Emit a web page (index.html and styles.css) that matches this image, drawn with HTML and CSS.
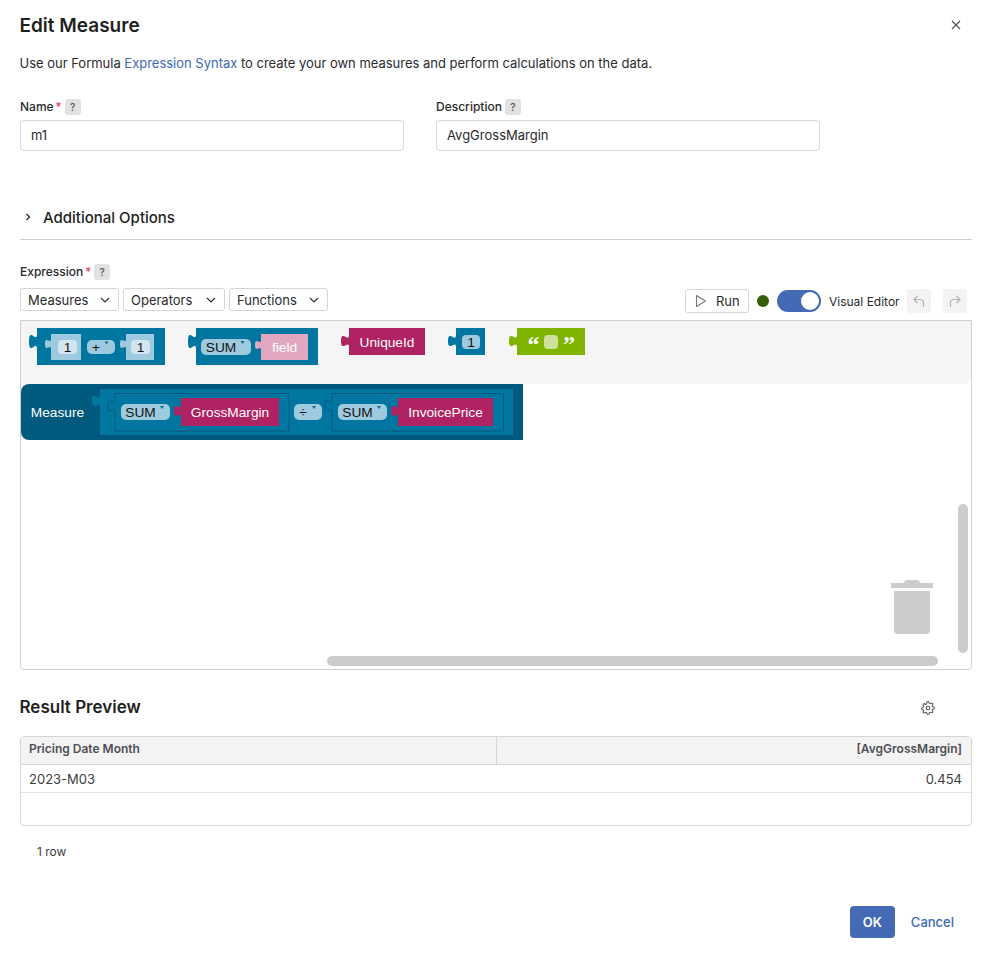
FILE: index.html
```html
<!DOCTYPE html>
<html lang="en">
<head>
<meta charset="UTF-8">
<title>Edit Measure</title>
<link rel="stylesheet" href="styles.css">
</head>
<body>
<div class="dialog">

  <!-- Header -->
  <div class="head">
    <h1>Edit Measure</h1>
    <button class="close" aria-label="Close">
      <svg width="10" height="10" viewBox="0 0 10 10"><path d="M1 1l8 8M9 1l-8 8" stroke="#555" stroke-width="1.2" fill="none"/></svg>
    </button>
  </div>
  <p class="intro">Use our Formula <a href="#">Expression Syntax</a> to create your own measures and perform calculations on the data.</p>

  <!-- Name / description -->
  <div class="fields">
    <div>
      <div class="label">Name<span class="req">*</span><span class="help">?</span></div>
      <input class="text" type="text" value="m1">
    </div>
    <div>
      <div class="label">Description<span class="help">?</span></div>
      <input class="text" type="text" value="AvgGrossMargin">
    </div>
  </div>

  <div class="options">
    <svg width="8" height="8" viewBox="0 0 8 8"><path d="M2.5 1l3 3-3 3" stroke="#222" stroke-width="1.2" fill="none"/></svg>
    <span>Additional Options</span>
  </div>

  <!-- Expression editor -->
  <div class="label expr-label">Expression<span class="req">*</span><span class="help">?</span></div>
  <div class="toolbar">
    <div class="menus">
      <button class="menu m1">Measures<svg width="10" height="6" viewBox="0 0 10 6"><path d="M1 1l4 4 4-4" stroke="#333" stroke-width="1.2" fill="none"/></svg></button>
      <button class="menu m2">Operators<svg width="10" height="6" viewBox="0 0 10 6"><path d="M1 1l4 4 4-4" stroke="#333" stroke-width="1.2" fill="none"/></svg></button>
      <button class="menu m3">Functions<svg width="10" height="6" viewBox="0 0 10 6"><path d="M1 1l4 4 4-4" stroke="#333" stroke-width="1.2" fill="none"/></svg></button>
    </div>
    <div class="actions">
      <button class="run">
        <svg width="12" height="14" viewBox="0 0 12 14"><path d="M1.5 1.5v11l9-5.5z" stroke="#777" stroke-width="1.1" stroke-linejoin="round" fill="none"/></svg>
        Run
      </button>
      <span class="dot"></span>
      <span class="toggle"><span class="thumb"></span></span>
      <span class="toggle-text">Visual Editor</span>
      <button class="hist">
        <svg width="14" height="14" viewBox="0 0 14 14"><path d="M5.5 2L2 5.5 5.5 9M2 5.5h6.500a3 3 0 0 1 3 3V13" stroke="#b5b5b5" stroke-width="1.200" fill="none"/></svg>
      </button>
      <button class="hist">
        <svg width="14" height="14" viewBox="0 0 14 14"><path d="M8.500 2L12 5.500 8.500 9M12 5.500H5.500a3 3 0 0 0-3 3V13" stroke="#b5b5b5" stroke-width="1.200" fill="none"/></svg>
      </button>
    </div>
  </div>

  <div class="workspace">
    <svg class="blocks" width="950" height="348" viewBox="21 321 950 348">
      <path d="M21 321H971V376a8 8 0 0 1-8 8H21z" fill="#f5f5f5"/>

      <!-- toolbox: 1 + 1 -->
      <path d="M37 328V334c0 10-8-8-8 7.500s8-2.500 8 7.500V365H165V328z" fill="#0076a0"/>
      <path d="M51 334V339c0 6-6-4-6 5s6-1 6 5V360H81V334z" fill="#9ecadf"/>
      <rect x="58" y="340" width="19" height="14" rx="4" fill="#d3e6ef"/>
      <text class="bt dark" x="67.500" y="352">1</text>
      <rect x="87" y="340" width="28" height="14" rx="5" fill="#9ecadf"/>
      <text class="bt dark" x="96" y="352">+</text>
      <path class="arrow" d="M104.500 341.500h4l-2 3z"/>
      <path d="M126 334V339c0 6-6-4-6 5s6-1 6 5V360H154V334z" fill="#9ecadf"/>
      <rect x="131" y="340" width="19" height="14" rx="4" fill="#d3e6ef"/>
      <text class="bt dark" x="140.500" y="352">1</text>

      <!-- toolbox: SUM field -->
      <path d="M196 328V334c0 10-8-8-8 7.500s8-2.500 8 7.500V365H318V328z" fill="#0076a0"/>
      <rect x="201" y="339" width="50" height="16" rx="5" fill="#9ecadf"/>
      <text class="bt dark" x="221" y="352">SUM</text>
      <path class="arrow" d="M240.500 341h4l-2 3z"/>
      <path d="M261 334V340c0 6-6-4-6 5s6-1 6 5V360H308V334z" fill="#e1a7c1"/>
      <text class="bt" x="284.500" y="352">field</text>

      <!-- toolbox: UniqueId -->
      <path d="M349 328V335c0 8-8-6-8 6s8-2 8 6V355H425V328z" fill="#af2362"/>
      <text class="bt" x="387" y="347">UniqueId</text>

      <!-- toolbox: number -->
      <path d="M456 328V335c0 8-8-6-8 6s8-2 8 6V355H485V328z" fill="#0076a0"/>
      <rect x="462" y="335" width="18" height="14" rx="4" fill="#9ecadf"/>
      <text class="bt dark" x="471" y="347">1</text>

      <!-- toolbox: text -->
      <path d="M517 328V335c0 8-8-6-8 6s8-2 8 6V355H585V328z" fill="#7fb500"/>
      <text class="quote" x="533.500" y="352">“</text>
      <rect x="544" y="335" width="14" height="14" rx="4" fill="#cfe29c"/>
      <text class="quote" x="569" y="352">”</text>

      <!-- Measure block -->
      <path d="M29 384H523V440H29a8 8 0 0 1-8-8V392a8 8 0 0 1 8-8z" fill="#005a7e"/>
      <text class="bt" x="57.500" y="417">Measure</text>
      <path d="M100 389V395c0 8-8-6-8 6s8-2 8 6V435H513V389z" fill="#0076a0"/>

      <path d="M115 393.500V400c0 7-7-5-7 6s7-1 7 6V431H289V393.500z" fill="#0076a0" stroke="#005a7e"/>
      <rect x="121" y="404" width="49" height="16" rx="5" fill="#9ecadf"/>
      <text class="bt dark" x="140.500" y="417">SUM</text>
      <path class="arrow" d="M160 406h4l-2 3z"/>
      <path d="M181 398V405c0 7-7-5-7 6s7-1 7 6V426H279V398z" fill="#af2362"/>
      <text class="bt" x="230" y="417">GrossMargin</text>

      <rect x="294" y="404" width="28" height="16" rx="5" fill="#9ecadf"/>
      <text class="bt dark" x="303" y="417">÷</text>
      <path class="arrow" d="M312 406h4l-2 3z"/>

      <path d="M332 393.500V400c0 7-7-5-7 6s7-1 7 6V431H503.500V393.500z" fill="#0076a0" stroke="#005a7e"/>
      <rect x="338" y="404" width="49" height="16" rx="5" fill="#9ecadf"/>
      <text class="bt dark" x="357.500" y="417">SUM</text>
      <path class="arrow" d="M377 406h4l-2 3z"/>
      <path d="M398 398V405c0 7-7-5-7 6s7-1 7 6V426H493V398z" fill="#af2362"/>
      <text class="bt" x="445.500" y="417">InvoicePrice</text>
    </svg>

    <svg class="trash" width="42" height="54" viewBox="0 0 42 54">
      <path d="M0 8V3H12L15 0H27L30 3H42V8z" fill="#ccc"/>
      <path d="M3 11H39V50a4 4 0 0 1-4 4H7a4 4 0 0 1-4-4z" fill="#ccc"/>
    </svg>
    <div class="scroll-y"></div>
    <div class="scroll-x"></div>
  </div>

  <!-- Result preview -->
  <div class="preview-head">
    <h2>Result Preview</h2>
    <svg class="gear" width="14" height="14" viewBox="0 0 24 24" fill="none" stroke="#555" stroke-width="1.800" stroke-linejoin="round">
      <circle cx="12" cy="12" r="3"/>
      <path d="M19.400 15a1.650 1.650 0 0 0 .33 1.820l.06.06a2 2 0 1 1-2.830 2.830l-.06-.06a1.650 1.650 0 0 0-2.800 1.170V21a2 2 0 0 1-4 0v-.09a1.650 1.650 0 0 0-2.820-1.120l-.06.06a2 2 0 1 1-2.830-2.830l.06-.06A1.650 1.650 0 0 0 3.090 15H3a2 2 0 0 1 0-4h.09a1.650 1.650 0 0 0 1.120-2.820l-.06-.06a2 2 0 1 1 2.830-2.830l.06.06A1.650 1.650 0 0 0 9.860 4.230V3a2 2 0 0 1 4 0v.09a1.650 1.650 0 0 0 2.820 1.120l.06-.06a2 2 0 1 1 2.830 2.830l-.06.06a1.650 1.650 0 0 0 1.170 2.800H21a2 2 0 0 1 0 4h-.09a1.650 1.650 0 0 0-1.510 1.160z"/>
    </svg>
  </div>
  <div class="grid">
    <div class="row header">
      <div class="cell">Pricing Date Month</div>
      <div class="cell num">[AvgGrossMargin]</div>
    </div>
    <div class="row">
      <div class="cell">2023-M03</div>
      <div class="cell num">0.454</div>
    </div>
  </div>
  <div class="count">1 row</div>

  <div class="foot">
    <button class="ok">OK</button>
    <a class="cancel" href="#">Cancel</a>
  </div>
</div>
</body>
</html>
```

FILE: styles.css
```css
*{box-sizing:border-box}
body{margin:0;background:#fff;color:#1f1f21;font-family:Inter,"Liberation Sans",sans-serif}
button{font-family:inherit;cursor:pointer}
.dialog{width:991px;height:958px;padding:0 19px 0 20px;position:relative}

.head{display:flex;justify-content:space-between;align-items:center;height:50px}
h1{margin:0;font-size:19px;font-weight:600;margin-left:-.5px}
.close{border:0;background:none;padding:0;margin-right:11px;display:flex}
.intro{margin:4px 0 0 -.5px;font-size:13px;line-height:18px;letter-spacing:-.012px;color:#2a2a2c}
.intro a{color:#4169b8;text-decoration:none}

.fields{display:grid;grid-template-columns:384px 384px;gap:32px;margin-top:27px}
.label{font-size:12px;font-weight:500;line-height:16px;height:21px;display:flex;align-items:flex-start;color:#2a2a2c}
.req{color:#d9434e;margin-left:2px;font-weight:400}
.help{width:16px;height:16px;margin-left:3px;border-radius:3px;background:#e2e2e4;color:#555;font-size:10px;text-align:center}
.text{display:block;width:100%;height:31px;border:1px solid #d6d6d6;border-radius:4px;padding:0 10px 1px;font:13px Inter,sans-serif;color:#2a2a2c;outline:none}

.options{display:flex;align-items:center;gap:11px;height:45px;margin-top:44px;padding:0 0 0 4px;border-bottom:1px solid #cfcfcf;font-size:15px;font-weight:500}
.expr-label{margin-top:24px;height:24px}
.toolbar{display:flex;justify-content:space-between;align-items:flex-start;height:32px;margin-right:5px}
.menus{display:flex;gap:4px}
.menu{height:23px;border:1px solid #d6d6d6;border-radius:3px;background:#fff;color:#2a2a2c;font-size:13px;display:flex;align-items:center;justify-content:space-between;padding:0 8px 0 7px}
.m1{width:99px}
.m2{width:102px}
.m3{width:99px}
.actions{display:flex;align-items:center;height:24px;margin-top:1px}
.run{width:64px;height:24px;border:1px solid #d6d6d6;border-radius:3px;background:#fff;color:#2a2a2c;font-size:13px;font-weight:400;display:flex;align-items:center;gap:9px;padding:0 0 0 9px}
.dot{width:12px;height:12px;margin-left:8px;border-radius:50%;background:#356009}
.toggle{width:44px;height:22px;margin-left:8px;padding:2px;border-radius:11px;background:#4469b5;display:flex;justify-content:flex-end}
.thumb{width:18px;height:18px;border-radius:50%;background:#fff}
.toggle-text{margin-left:8px;width:78px;font-size:12px;color:#2a2a2c}
.hist{width:24px;height:24px;border:0;border-radius:3px;background:#f3f3f3;padding:0;display:flex;align-items:center;justify-content:center;margin-right:12px}
.hist:last-child{margin-right:0}

.workspace{position:relative;height:350px;border:1px solid #cfcfcf;border-radius:0 0 4px 4px;overflow:hidden}
.blocks{display:block}
.bt{font:500 13.7px "Liberation Sans",Arial,sans-serif;fill:#fff;text-anchor:middle}
.dark{fill:#111}
.arrow{fill:#0a6f96}
.quote{font:700 24px "Liberation Serif",serif;fill:#fff;text-anchor:middle}
.trash{position:absolute;left:870px;top:259px}
.scroll-y{position:absolute;left:937px;top:183px;width:10px;height:149px;border-radius:5px;background:#ccc}
.scroll-x{position:absolute;left:306px;top:335px;width:611px;height:10px;border-radius:5px;background:#ccc}

.preview-head{display:flex;justify-content:space-between;align-items:center;height:66px;padding:8px 36px 0 0}
h2{margin:0;font-size:17px;font-weight:600;margin-left:-.5px}
.gear{display:block;margin:2px 1px 0 0}
.grid{height:90px;border:1px solid #d6d6d6;border-radius:4px;overflow:hidden}
.row{display:grid;grid-template-columns:476px 1fr;height:28px;border-bottom:1px solid #e2e2e2;font-size:13px;color:#3d3d40}
.header{background:#f3f3f3;border-bottom-color:#d6d6d6;font-size:12px;font-weight:600;color:#4f4f55}
.cell{padding:0 9px 0 8px;display:flex;align-items:center}
.header .cell{padding-bottom:4px}
.header .cell:first-child{border-right:1px solid #d6d6d6}
.num{justify-content:flex-end}
.count{margin:18px 0 0 17px;font-size:12px;line-height:16px;color:#3d3d40}

.foot{position:absolute;right:37px;top:906px;display:flex;align-items:center;gap:16px}
.ok{width:45px;height:32px;border:0;border-radius:4px;background:#4469b5;color:#fff;font-size:13px;font-weight:600}
.cancel{color:#4169b8;font-size:13px;font-weight:500;text-decoration:none}
```
